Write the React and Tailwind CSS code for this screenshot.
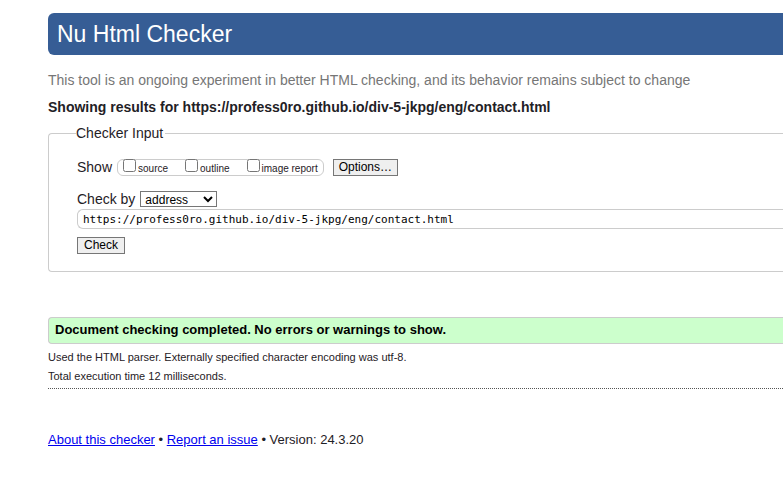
import { useState } from "react";

const reports = ["source", "outline", "image report"];
const documentUrl = "https://profess0ro.github.io/div-5-jkpg/eng/contact.html";

function ReportOption({ name }) {
  return (
    <label className="flex items-center gap-0.5 text-[10px] leading-4">
      <input type="checkbox" className="mb-[3px] size-[13px] shrink-0" />
      <span className="pt-[3px]">{name}</span>
    </label>
  );
}

export default function App() {
  const [url, setUrl] = useState(documentUrl);

  return (
    <div className="bg-white pt-[13px] pb-12 pl-12 font-['Liberation_Sans',Arial,sans-serif] text-[#1f2126]">
      <header>
        <h1 className="rounded-l-md bg-[#365d95] px-[9px] text-[23px] leading-[42px] text-white">
          Nu Html Checker
        </h1>
        <p className="mt-[15px] text-sm leading-5 text-[#767676]">
          This tool is an ongoing experiment in better HTML checking, and its behavior remains subject to change
        </p>
      </header>

      <main>
        <h2 className="mt-[7px] text-sm leading-5 font-bold">Showing results for {documentUrl}</h2>

        <form onSubmit={(event) => event.preventDefault()}>
          <fieldset className="mt-[6px] rounded-l-[4px] border border-r-0 border-[#ccc] pb-[17px] pl-7 text-sm">
            <legend className="-ml-px pr-0.5 leading-5">Checker Input</legend>
            <div className="mt-[14px] flex h-5 items-center">
              <span>Show</span>
              <div className="ml-[5px] flex h-[17px] items-center gap-[17px] rounded-md border border-[#ccc] px-[5px]">
                {reports.map((name) => (
                  <ReportOption key={name} name={name} />
                ))}
              </div>
              <button type="button" className="ml-[9px] h-[17px] border border-[#767676] bg-[#efefef] px-[5px] text-xs leading-[15px] text-black">
                Options…
              </button>
            </div>
            <div className="mt-3 flex h-5 items-center gap-[5px]">
              <label htmlFor="method">Check by</label>
              <select id="method" defaultValue="address" className="h-4 w-[77px] border border-[#767676] bg-white text-xs leading-[14px] text-black">
                <option>address</option>
                <option>file upload</option>
                <option>text input</option>
              </select>
            </div>
            <input
              type="url"
              aria-label="Address"
              value={url}
              onChange={(event) => setUrl(event.target.value)}
              className="block h-5 w-full rounded-l-md border border-r-0 border-[#ccc] px-[5px] font-['DejaVu_Sans_Mono',monospace] text-[11px] text-black"
            />
            <button type="submit" className="mt-2 block h-[17px] border border-[#767676] bg-[#efefef] px-[6px] text-xs leading-[15px] text-black">
              Check
            </button>
          </fieldset>
        </form>

        <section className="mt-[45px] border-b border-dotted border-[#555] pb-[2px]">
          <p className="rounded-l-[4px] border border-r-0 border-[#ccc] bg-[#cfc] px-[6px] pb-px text-[13px] leading-6 font-bold text-black">
            Document checking completed. No errors or warnings to show.
          </p>
          <p className="mt-1 text-[11px] leading-[19px]">
            Used the HTML parser. Externally specified character encoding was utf-8.
          </p>
          <p className="text-[11px] leading-[19px]">Total execution time 12 milliseconds.</p>
        </section>
      </main>

      <footer className="mt-[41px] text-[13px] leading-5">
        <a href="#about" className="text-[#0000ee] underline">About this checker</a>
        {" • "}
        <a href="#issues" className="text-[#0000ee] underline">Report an issue</a>
        {" • Version: 24.3.20"}
      </footer>
    </div>
  );
}
